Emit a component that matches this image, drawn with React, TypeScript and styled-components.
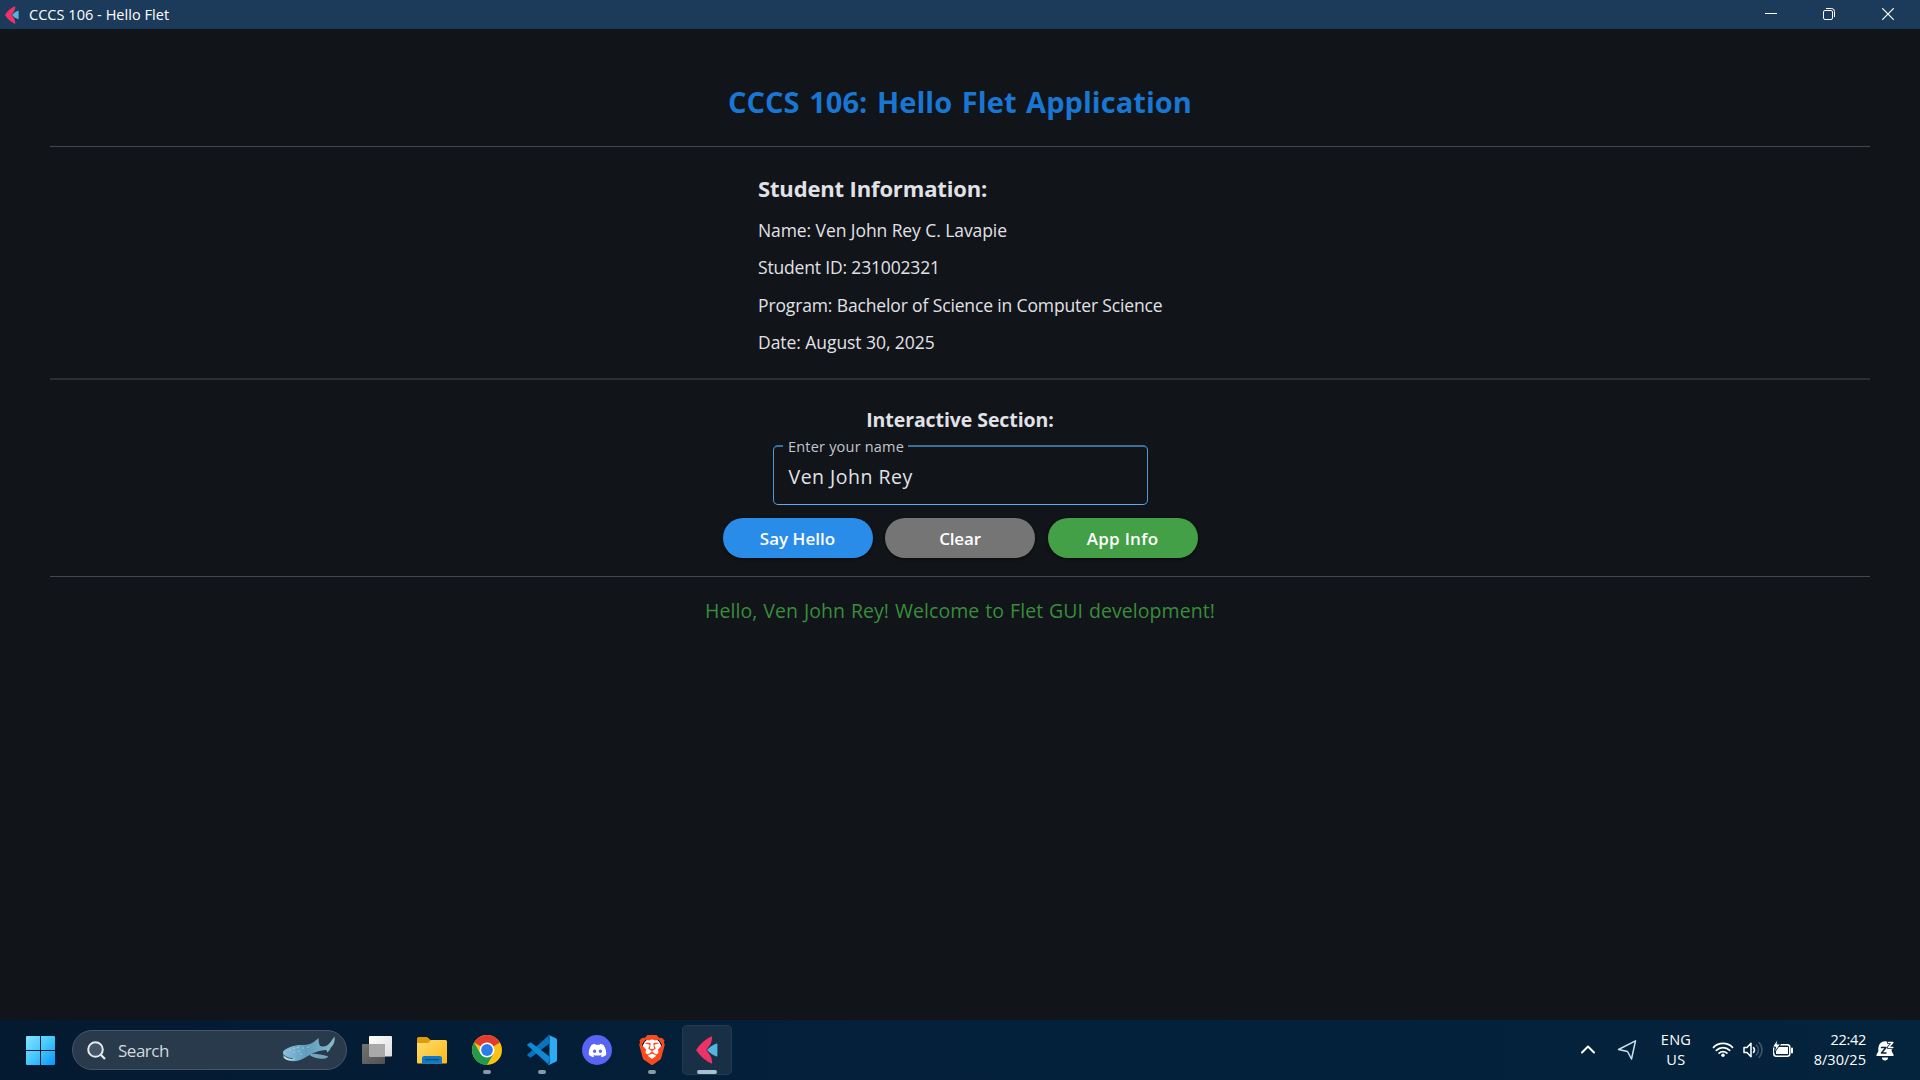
import React from 'react';
import styled, { createGlobalStyle, css } from 'styled-components';
import { FaDiscord } from 'react-icons/fa';
import { SiBrave } from 'react-icons/si';

const Global = createGlobalStyle`
  * { box-sizing: border-box; }
  html, body { margin: 0; background: #111418; }
  body { font-family: "Open Sans", "Noto Sans", sans-serif; overflow: hidden; }
  svg { display: block; flex: none; }
`;

const Screen = styled.div`
  display: flex;
  flex-direction: column;
  width: 1920px;
  height: 1080px;
  background: #111418;
  color: #e1e2e8;
`;

/* Window title bar */
const TitleBar = styled.header`
  display: flex;
  align-items: center;
  height: 29px;
  padding: 0 3px 0 5px;
  background: #1c3a5a;
`;
const WindowTitle = styled.span`
  flex: 1;
  margin-left: 10px;
  color: #fff;
  font-size: 14.5px;
  line-height: 28px;
  letter-spacing: 0.04px;
`;
const WindowButton = styled.span`
  display: flex;
  justify-content: center;
  align-items: center;
  width: 58.5px;
  height: 29px;
  padding-bottom: 1px;
`;

/* Application page */
const Page = styled.main`
  display: flex;
  flex: 1;
  flex-direction: column;
  align-items: center;
  padding: 53px 50px 0;
`;
const Heading = styled.h1`
  margin: 0;
  color: #1976d2;
  font-size: 29px;
  font-weight: 700;
  line-height: 40px;
  letter-spacing: 0.05px;
  word-spacing: 2px;
`;
const Divider = styled.hr<{ $above: number; $below: number; $soft?: boolean }>`
  align-self: stretch;
  height: ${p => (p.$soft ? 2 : 1)}px;
  margin: ${p => p.$above}px 0 ${p => p.$below}px;
  border: 0;
  background: ${p => (p.$soft ? '#2b2f34' : '#42464d')};
`;
const Info = styled.section`
  width: 404px;
  white-space: nowrap;
`;
const InfoTitle = styled.h2`
  margin: 0 0 15px;
  font-size: 22px;
  font-weight: 700;
  line-height: 30px;
  letter-spacing: -0.15px;
`;
const InfoRow = styled.p<{ $track: number }>`
  margin: 0;
  font-size: 17.5px;
  line-height: 25px;
  letter-spacing: ${p => p.$track}px;
  & + & { margin-top: 12.4px; }
`;
const SectionTitle = styled.h3`
  margin: 0;
  font-size: 19.5px;
  font-weight: 700;
  line-height: 25px;
  letter-spacing: -0.08px;
`;
const Field = styled.label`
  position: relative;
  display: flex;
  align-items: center;
  width: 375px;
  height: 60px;
  margin-top: 13px;
  padding: 3px 0 0 15px;
  border: 1px solid #5098d8;
  border-top: 2px solid #3b6f9c;
  border-bottom-color: #60aaf0;
  border-radius: 5px;
`;
const FieldLabel = styled.span`
  position: absolute;
  top: -11px;
  left: 9.5px;
  padding: 0 4px 0 5px;
  background: #111418;
  color: #c3c6cf;
  font-size: 14.5px;
  line-height: 22px;
  letter-spacing: 0.2px;
`;
const FieldValue = styled.span`
  font-size: 19.5px;
  line-height: 26px;
  letter-spacing: 0.5px;
`;
const Buttons = styled.div`
  display: flex;
  gap: 12.5px;
  margin-top: 12.5px;
`;
const Button = styled.button<{ $fill: string; $track: number }>`
  width: 150px;
  height: 40px;
  padding: 1px 0 0;
  border: 0;
  border-radius: 20px;
  background: ${p => p.$fill};
  box-shadow: 0 1px 3px rgba(0, 0, 0, 0.5);
  color: #fff;
  font-family: inherit;
  font-size: 17px;
  font-weight: 600;
  line-height: 39px;
  letter-spacing: ${p => p.$track}px;
`;
const Greeting = styled.p`
  margin: 0;
  color: #388e3c;
  font-size: 19.5px;
  line-height: 26px;
  letter-spacing: 0.06px;
  word-spacing: 0.8px;
`;

/* Taskbar */
const Taskbar = styled.footer`
  display: flex;
  align-items: center;
  height: 60px;
  padding: 0 16px 0 25px;
  background: linear-gradient(90deg, #041a31, #04203a 45%, #04233c);
`;
const SearchBox = styled.div`
  display: flex;
  align-items: center;
  width: 275px;
  height: 40px;
  margin: 0 5px 0 17px;
  padding: 0 10px 0 14px;
  border: 1px solid #465668;
  border-radius: 20px;
  background: #293a4d;
`;
const SearchText = styled.span`
  flex: 1;
  margin-left: 12px;
  color: #d3d8de;
  font-size: 17px;
  letter-spacing: -0.48px;
`;
const Apps = styled.nav`
  display: flex;
  flex: 1;
  gap: 5px;
`;
const AppSlot = styled.span<{ $state?: 'running' | 'active' }>`
  position: relative;
  display: flex;
  align-items: center;
  justify-content: center;
  width: 50px;
  height: 50px;
  border-radius: 5px;
  ${p => p.$state === 'active' && css`
    background: #182f45;
    box-shadow: inset 0 0 0 1px #243a50;
  `}
  ${p => p.$state && css`
    &::after {
      content: '';
      position: absolute;
      bottom: 1px;
      width: ${p.$state === 'active' ? 20 : 8}px;
      height: 4px;
      border-radius: 2px;
      background: ${p.$state === 'active' ? '#a5c0d2' : '#8b98a5'};
    }
  `}
`;
const DiscordDisc = styled.span`
  display: flex;
  align-items: center;
  justify-content: center;
  width: 30px;
  height: 30px;
  border-radius: 50%;
  background: #5865f2;
  color: #fff;
`;
const BraveMark = styled.span`
  display: flex;
  color: #fb4a1d;
  background: radial-gradient(ellipse 10px 12px at 50% 50%, #fff 95%, transparent);
`;
const TraySlot = styled.span<{ $w: number }>`
  display: flex;
  justify-content: center;
  width: ${p => p.$w}px;
`;
const TrayText = styled.div<{ $w: number; $align: string; $gap?: number }>`
  width: ${p => p.$w}px;
  margin-right: ${p => p.$gap ?? 0}px;
  color: #fff;
  font-size: 14.5px;
  line-height: 20px;
  text-align: ${p => p.$align};
`;
const Tracked = styled.div<{ $track: number }>`
  letter-spacing: ${p => p.$track}px;
`;

const FletLogo = ({ w, h }: { w: number; h: number }) => (
  <svg width={w} height={h} viewBox="0 0 22 28" preserveAspectRatio="none">
    <path d="M.4 13.400C4.500 7.500 9.500 3 15.300.5c.7-.3 1 .1.900.8-.4 3.200-.6 5.200-2.200 7.700L10.300 14l3.700 5c1.600 2.500 1.800 4.500 2.200 7.700.1.700-.2 1.100-.9.800C9.500 25 4.500 20.500.4 14.600c-.3-.4-.3-.8 0-1.200Z" fill="#ee3167" />
    <path d="M11 14c2.600-2.800 5.400-4.900 9.500-6.500.6-.2.900 0 .9.600v11.800c0 .6-.3.800-.9.600C16.400 18.900 13.600 16.800 11 14Z" fill="#56b2df" />
  </svg>
);

const StartIcon = () => (
  <svg width="30" height="30" viewBox="0 0 30 30">
    <defs><linearGradient id="win" gradientUnits="userSpaceOnUse" x1="1" y1="1" x2="30" y2="30">
      <stop offset="0" stopColor="#87e2ff" /><stop offset=".5" stopColor="#44c8fc" /><stop offset="1" stopColor="#0797fb" />
    </linearGradient></defs>
    <path fill="url(#win)" d="M2 1h13v14H1V2a1 1 0 0 1 1-1ZM16 1h13a1 1 0 0 1 1 1v13H16ZM1 16h14v14H2a1 1 0 0 1-1-1ZM16 16h14v13a1 1 0 0 1-1 1H16Z" />
  </svg>
);

const SharkArt = () => (
  <svg width="54" height="28" viewBox="0 0 54 28">
    <defs><linearGradient id="shark" x1="0" y1="0" x2="1" y2="0">
      <stop offset="0" stopColor="#8cc0da" /><stop offset=".45" stopColor="#5f9dbf" /><stop offset="1" stopColor="#86bcc6" />
    </linearGradient></defs>
    <path fill="#74a6b8" d="M27 18.500c5-1.800 11 0 19 1.800 0 1.700-3 2.700-7 2.500-5-.3-9-1.800-12-4.300Z" />
    <path fill="url(#shark)" d="M1 15.500C5 11.500 12 9 19 9c5 0 9-.5 12-2.500 2-1.500 4-3 5.500-4.500.3 3 .2 5.500 1.500 8 2.500.8 5 .5 7-.5C48 7.500 50 4 52.500.5c.7 4-.5 8.500-4 11.500-.2 1.500-1.500 3-3.500 4.500 0-1.500 0-2-1-2.500-8 .5-13 3-19 6.500-4 2.500-8 4.500-13 4.700C6 25.400.5 21.500 1 15.500Z" />
    <path fill="#b9d8e4" d="M1.500 19.500c3 2.200 7 3.300 12 3-3 2.800-9.500 2.700-12-1Z" />
    <path fill="none" stroke="#315b74" strokeWidth="1" d="M1.500 19c3 2.500 6 3.500 9.500 3.700" />
    <g fill="#d6eef5"><circle cx="8" cy="14" r=".6" /><circle cx="12" cy="12.500" r=".6" /><circle cx="12" cy="16" r=".6" /><circle cx="16" cy="11.500" r=".6" /><circle cx="17" cy="15" r=".6" /><circle cx="21" cy="12" r=".6" /><circle cx="19" cy="18" r=".6" /><circle cx="26" cy="11" r=".6" /></g>
  </svg>
);

const TaskViewIcon = () => (
  <svg width="30" height="30" viewBox="0 0 30 30">
    <defs>
      <linearGradient id="tvb" x1="0" y1="0" x2="1" y2="1"><stop stopColor="#737373" /><stop offset="1" stopColor="#505050" /></linearGradient>
      <linearGradient id="tvf" x1="0" y1="0" x2="1" y2="1"><stop stopColor="#fff" /><stop offset="1" stopColor="#dedede" /></linearGradient>
    </defs>
    <rect x="0" y="9" width="23" height="20" rx="1" fill="url(#tvb)" />
    <rect x="7" y="1" width="23" height="20.500" rx="1" fill="url(#tvf)" />
    <path d="M7 9h16v12.500H8a1 1 0 0 1-1-1Z" fill="#a9a9a9" />
  </svg>
);

const ExplorerIcon = () => (
  <svg width="30" height="30" viewBox="0 0 30 30">
    <defs><linearGradient id="fold" x1="0" y1="0" x2="1" y2="1"><stop stopColor="#ffdd70" /><stop offset="1" stopColor="#fbb914" /></linearGradient></defs>
    <path d="M0 3.500A1.500 1.500 0 0 1 1.500 2H9c1 0 1.500.2 2 .8L13.500 5H28v5H0Z" fill="#dd9d0a" />
    <path d="M0 8h10c1 0 1.500-.3 2-.8L14 5h14.500A1.500 1.500 0 0 1 30 6.500v21a1 1 0 0 1-1 1H1a1 1 0 0 1-1-1Z" fill="url(#fold)" />
    <path d="M5 28.500v-5.300A2.200 2.200 0 0 1 7.200 21h15.600a2.200 2.200 0 0 1 2.200 2.200v5.300Z" fill="#0d79cb" />
    <rect x="8" y="24" width="14" height="1.300" rx=".6" fill="#0a4a82" />
  </svg>
);

const ChromeIcon = () => (
  <svg width="30" height="30" viewBox="0 0 30 30">
    <circle cx="15" cy="15" r="15" fill="#fbc116" />
    <path d="M15 15 2.010 7.500A15 15 0 0 1 27.990 7.500Z" fill="#e33b2e" />
    <path d="M2.010 7.500A15 15 0 0 0 15 30l6.500-11.250L15 15 8.500 18.750Z" fill="#229a49" />
    <circle cx="15" cy="15" r="7.500" fill="#fff" />
    <circle cx="15" cy="15" r="5.900" fill="#2b7de9" />
  </svg>
);

const CodeIcon = () => (
  <svg width="30" height="30" viewBox="0 0 30 30">
    <path d="M1.300 18.700 21.500.5l1 8-18.200 13.700c-.5.4-1.100.4-1.600 0L.5 20.500c-.6-.5-.5-1.200.8-1.800Z" fill="#0a73bd" />
    <path d="M1.300 11.300 21.500 29.500l1-8L4.300 7.800c-.5-.4-1.100-.4-1.600 0L.5 9.500c-.6.5-.5 1.200.8 1.800Z" fill="#0f89d4" />
    <path d="M20.700 29.700c.5.300 1.100.3 1.700 0l6.500-3c.7-.3 1.100-1 1.100-1.700V5c0-.7-.4-1.400-1.100-1.700l-6.500-3c-.7-.3-1.300-.2-1.900.2.700-.2 2 .2 2 1.500v26c0 1.300-1.300 1.900-1.800 1.700Z" fill="#2caaf2" />
  </svg>
);

const Stroke = styled.svg.attrs({ width: 30, height: 30, viewBox: '0 0 30 30' })`
  fill: none;
  stroke: #fff;
  stroke-width: 1.500;
  stroke-linecap: round;
  stroke-linejoin: round;
`;

const details: [string, number][] = [
  ['Name: Ven John Rey C. Lavapie', -0.08],
  ['Student ID: 231002321', -0.17],
  ['Program: Bachelor of Science in Computer Science', -0.135],
  ['Date: August 30, 2025', -0.06],
];

export default function App() {
  return (
    <Screen>
      <Global />
      <TitleBar>
        <FletLogo w={14} h={18} />
        <WindowTitle>CCCS 106 - Hello Flet</WindowTitle>
        <WindowButton>
          <svg width="12" height="12"><path d="M0 5.500h12" stroke="#fff" /></svg>
        </WindowButton>
        <WindowButton>
          <svg width="12" height="12" fill="none" stroke="#fff">
            <rect x=".5" y="2.500" width="9" height="9" rx="1.500" />
            <path d="M3 .5h5.500a3 3 0 0 1 3 3V9" />
          </svg>
        </WindowButton>
        <WindowButton>
          <svg width="12" height="12"><path d="m.3.300 11.400 11.400M11.700.3.300 11.700" stroke="#fff" strokeWidth="1.200" /></svg>
        </WindowButton>
      </TitleBar>

      <Page>
        <Heading>CCCS 106: Hello Flet Application</Heading>
        <Divider $above={24} $below={26} />
        <Info>
          <InfoTitle>Student Information:</InfoTitle>
          {details.map(([text, track]) => <InfoRow key={text} $track={track}>{text}</InfoRow>)}
        </Info>
        <Divider $above={23} $below={27} $soft />
        <SectionTitle>Interactive Section:</SectionTitle>
        <Field>
          <FieldLabel>Enter your name</FieldLabel>
          <FieldValue>Ven John Rey</FieldValue>
        </Field>
        <Buttons>
          <Button $fill="#298ce8" $track={0.03}>Say Hello</Button>
          <Button $fill="#757575" $track={-0.17}>Clear</Button>
          <Button $fill="#43a047" $track={0.29}>App Info</Button>
        </Buttons>
        <Divider $above={18.5} $below={20.8} />
        <Greeting>Hello, Ven John Rey! Welcome to Flet GUI development!</Greeting>
      </Page>

      <Taskbar>
        <StartIcon />
        <SearchBox>
          <svg width="19" height="19" viewBox="0 0 19 19" fill="none" stroke="#e6e9ec">
            <circle cx="8.500" cy="8.500" r="7.300" strokeWidth="2" fill="#43566a" />
            <path d="m13.800 13.800 4.200 4.200" strokeWidth="2.300" />
          </svg>
          <SearchText>Search</SearchText>
          <SharkArt />
        </SearchBox>
        <Apps>
          <AppSlot><TaskViewIcon /></AppSlot>
          <AppSlot><ExplorerIcon /></AppSlot>
          <AppSlot $state="running"><ChromeIcon /></AppSlot>
          <AppSlot $state="running"><CodeIcon /></AppSlot>
          <AppSlot><DiscordDisc><FaDiscord size={19} /></DiscordDisc></AppSlot>
          <AppSlot $state="running"><BraveMark><SiBrave size={30} /></BraveMark></AppSlot>
          <AppSlot $state="active"><FletLogo w={22} h={28} /></AppSlot>
        </Apps>
        <TraySlot $w={39}><Stroke><path d="m9 17.500 6-6 6 6" strokeWidth="2" /></Stroke></TraySlot>
        <TraySlot $w={39}><Stroke><path d="M6.500 14.500 23.500 5.800 19.500 24l-4-7.500Z" stroke="#c4e4ec" /></Stroke></TraySlot>
        <TrayText $w={60} $align="center" $gap={2}>
          <Tracked $track={0.26}>ENG</Tracked>
          <Tracked $track={0.4}>US</Tracked>
        </TrayText>
        <TraySlot $w={30}>
          <Stroke>
            <path d="M5.500 12.300a13.500 13.500 0 0 1 19 0M8.300 15.300a9.500 9.500 0 0 1 13.400 0M11.100 18.200a5.500 5.500 0 0 1 7.800 0" strokeWidth="1.700" />
            <circle cx="15" cy="20.300" r="1.700" fill="#fff" stroke="none" />
          </Stroke>
        </TraySlot>
        <TraySlot $w={30}>
          <Stroke>
            <path d="M6 12.500h3l4-4.300v13.600l-4-4.300H6Z" />
            <path d="M15.500 12.500a4 4 0 0 1 0 5" />
            <path d="M18.300 10a7 7 0 0 1 0 10M21 7.500a11 11 0 0 1 0 15" stroke="#40586c" />
          </Stroke>
        </TraySlot>
        <TraySlot $w={30}>
          <Stroke>
            <rect x="5.800" y="9.800" width="16" height="11.400" rx="2.500" />
            <path d="M8 12h12v7H8Z" fill="#fff" stroke="none" />
            <path d="M24 13.500v4" strokeWidth="2" />
            <path d="M9.300 4.500 4.500 12h3l-1 5.500 6-8.500H9.500Z" fill="#fff" stroke="#04223b" strokeWidth="1" />
          </Stroke>
        </TraySlot>
        <TrayText $w={68} $align="right">
          <Tracked $track={-0.29}>22:42</Tracked>
          <Tracked $track={0.03}>8/30/25</Tracked>
        </TrayText>
        <TraySlot $w={38}>
          <Stroke>
            <path d="M6.500 21v-1.500l1.800-3V13a6.700 6.700 0 0 1 13.400 0v3.500l1.800 3V21ZM12 22.500h6a3 3 0 0 1-6 0Z" fill="#fff" stroke="none" />
            <path d="M11.500 12.500h4.500l-4.500 5.500h4.500" stroke="#04223b" strokeWidth="1.500" />
            <path d="M18.500 7.500h4.300l-4.300 5h4.300" stroke="#04223b" strokeWidth="3.200" />
            <path d="M18.500 7.500h4.300l-4.300 5h4.300" strokeWidth="1.600" />
          </Stroke>
        </TraySlot>
      </Taskbar>
    </Screen>
  );
}
